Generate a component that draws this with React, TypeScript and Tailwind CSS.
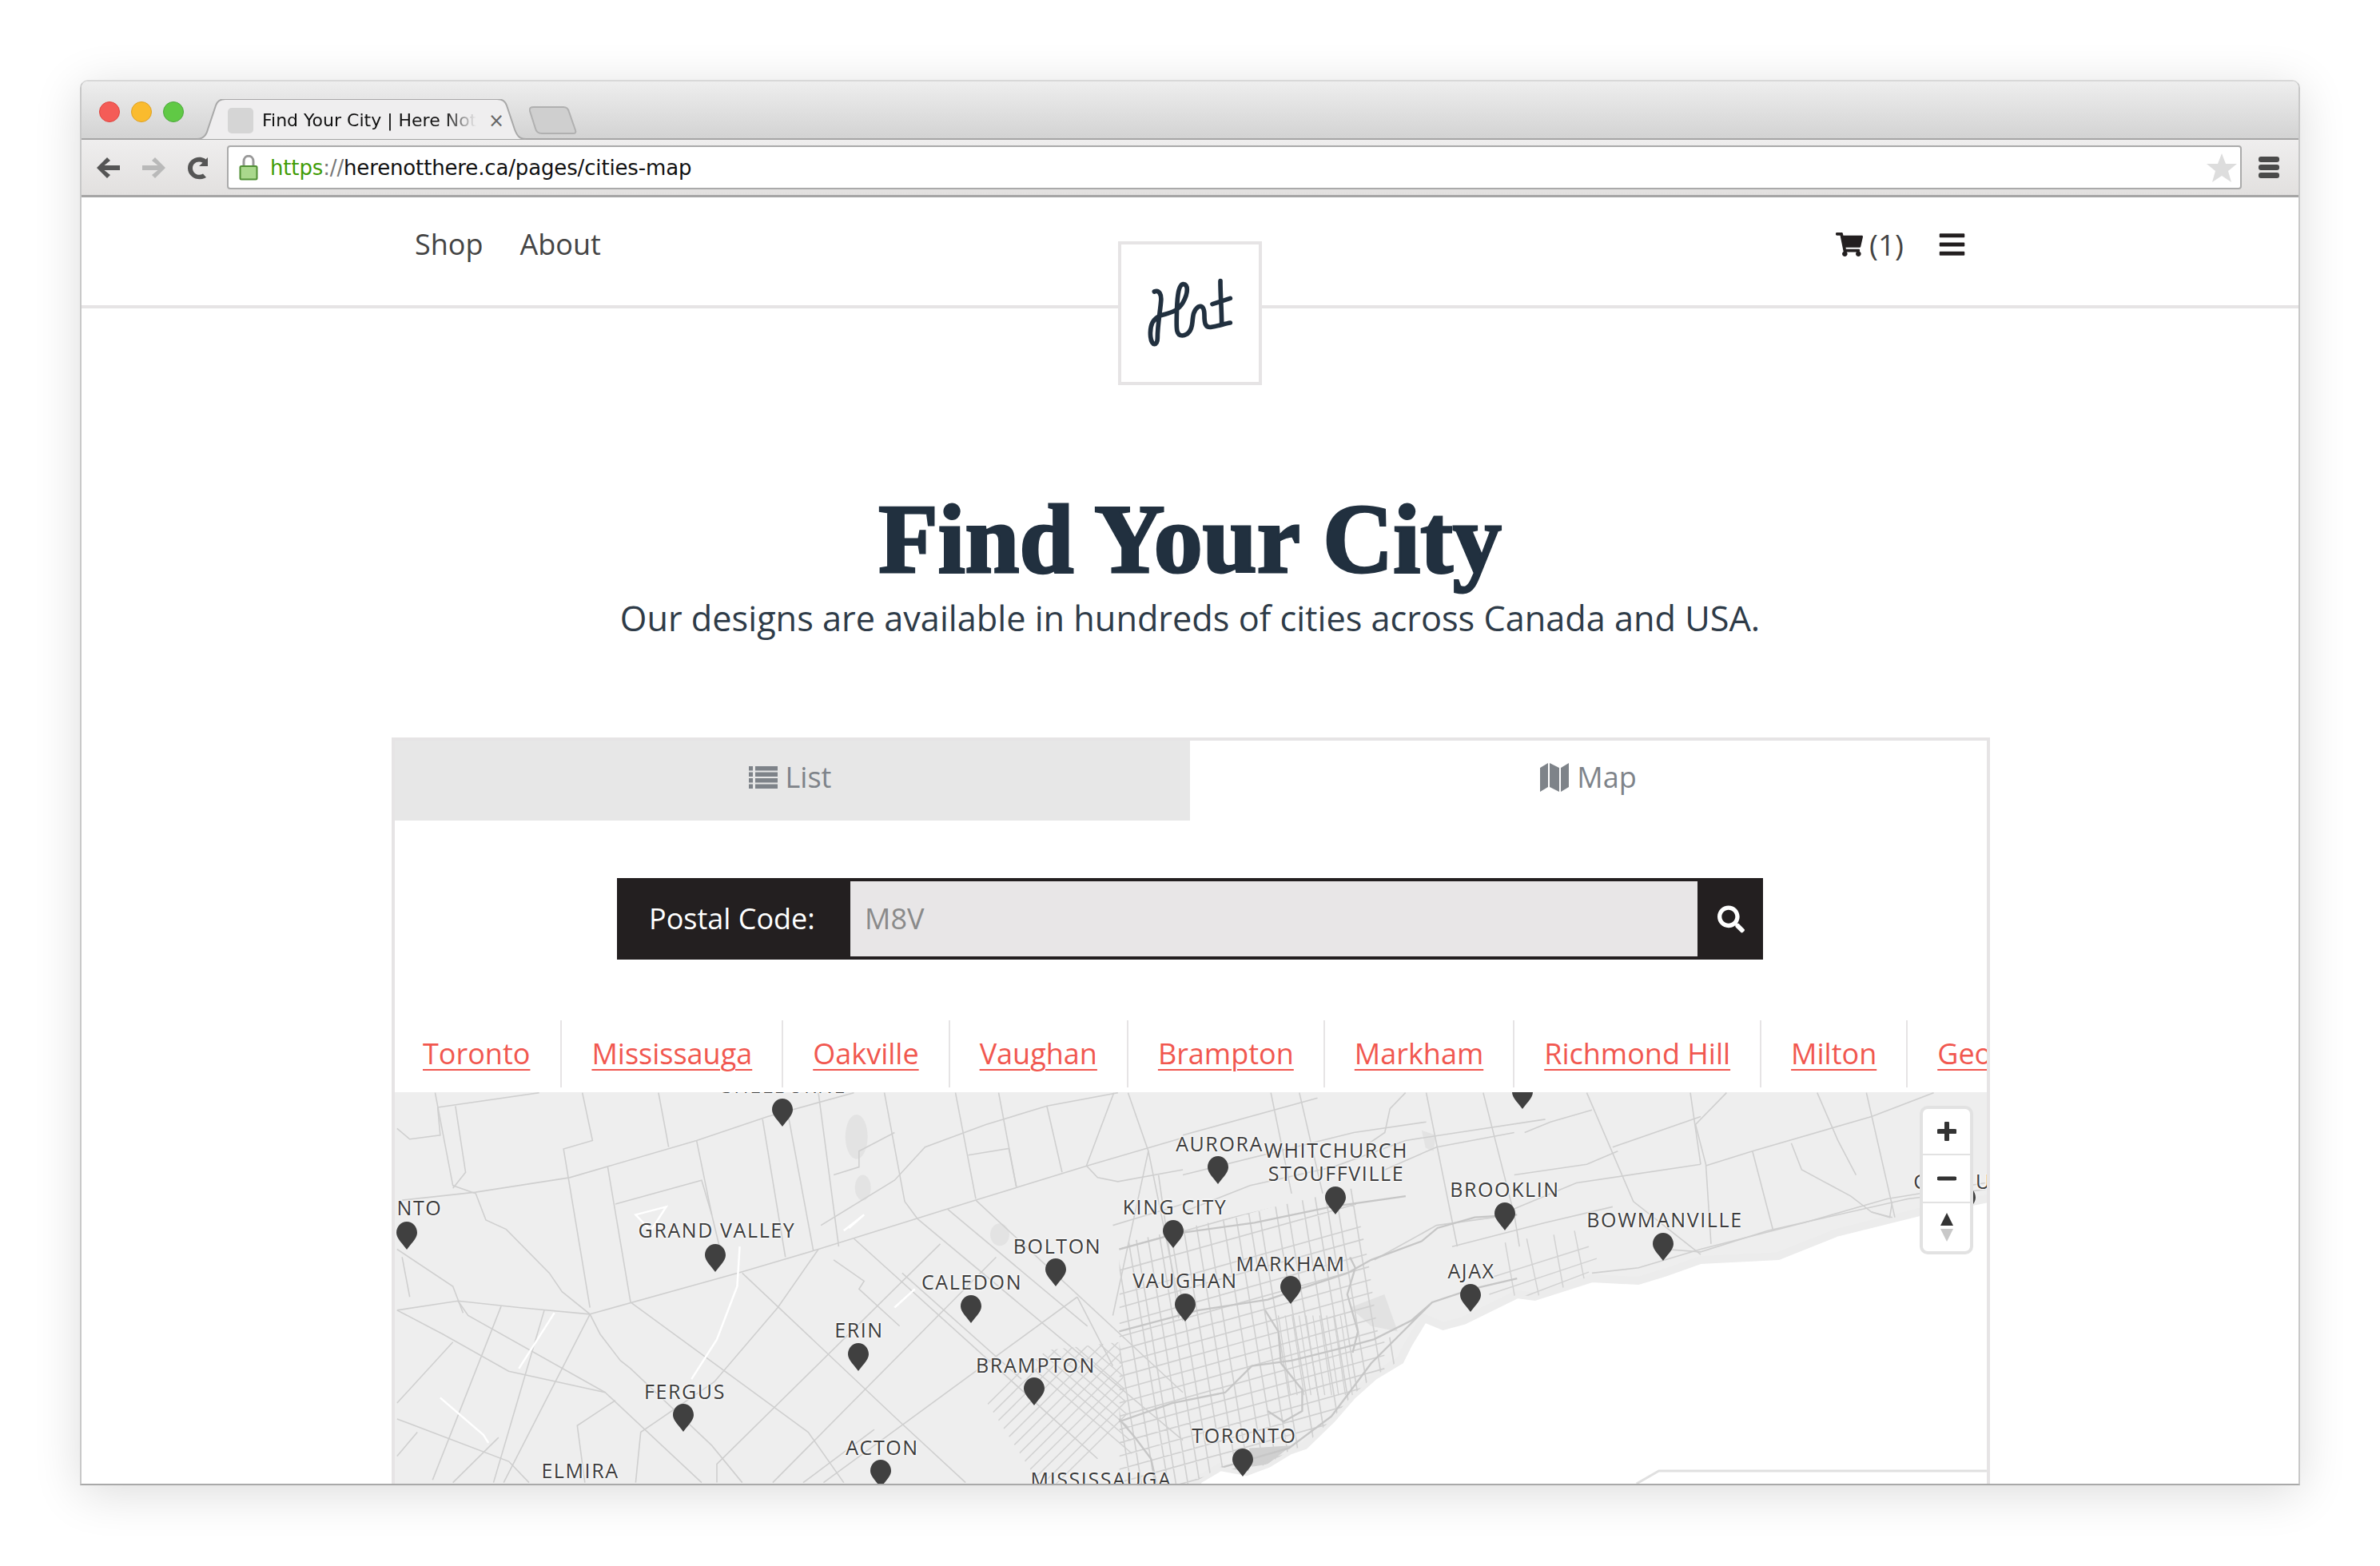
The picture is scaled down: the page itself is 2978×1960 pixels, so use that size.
import { FaBars, FaSearch, FaShoppingCart } from 'react-icons/fa';

const cities = ['Toronto', 'Mississauga', 'Oakville', 'Vaughan', 'Brampton', 'Markham', 'Richmond Hill', 'Milton', 'Georgetown'];

// map items use page coordinates, the map box starts at 494,1366
const pins = [
    [979, 1409], [509, 1563], [895, 1591], [1321, 1609], [1215, 1655], [1074, 1715], [1294, 1758], [855, 1791],
    [1102, 1861], [724, 1892], [1468, 1561], [1483, 1653], [1524, 1481], [1671, 1519], [1883, 1539], [2081, 1577],
    [1615, 1631], [1840, 1641], [1555, 1847], [1905, 1387], [2459, 1519],
];

const labels: [string, number, number][] = [
    ['SHELBURNE', 979, 1348], ['NTO', 523, 1501], ['GRAND VALLEY', 895, 1529], ['BOLTON', 1321, 1549],
    ['CALEDON', 1214, 1594], ['ERIN', 1073, 1654], ['BRAMPTON', 1294, 1698], ['FERGUS', 855, 1731],
    ['ACTON', 1102, 1801], ['ELMIRA', 724, 1830], ['MISSISSAUGA', 1376, 1841], ['KING CITY', 1468, 1500],
    ['VAUGHAN', 1481, 1592], ['AURORA', 1524, 1421], ['WHITCHURCH', 1670, 1429], ['STOUFFVILLE', 1670, 1458],
    ['BROOKLIN', 1881, 1478], ['BOWMANVILLE', 2081, 1516], ['MARKHAM', 1613, 1571], ['AJAX', 1839, 1580],
    ['TORONTO', 1555, 1786], ['C', 2401, 1468], ['U', 2480, 1468],
];

const land = '480,1340 2500,1340 2500,1498 2404,1517 2300,1543 2228,1572 2130,1577 2085,1593 2052,1603 1994,1600 1922,1623 1900,1620 1833,1653 1807,1660 1783,1650 1763,1683 1753,1703 1720,1723 1693,1747 1667,1777 1633,1810 1613,1817 1587,1833 1560,1843 1527,1837 1500,1853 1490,1870 480,1870';

// traced from the left half of the map
const leftRoads = [
    'M95 20 L130 370 L175 400 L195 500 L235 535 L320 700 L345 770 L400 855 L420 930 L460 1030 L480 1060 L640 1350 L700 1490',
    'M135 70 L155 320 L130 380', 'M100 75 L300 20', 'M20 155 L45 195 L105 180 L100 75', 'M30 425 L175 395 L360 340 L610 200 L750 110 L920 20',
    'M385 20 L405 200 L348 232 L400 830', 'M435 300 L480 810', 'M535 20 L555 225', 'M740 120 L785 640', 'M790 100 L840 615', 'M850 20 L890 600',
    'M980 20 L1020 430 L1045 495', 'M1120 20 L1160 420', 'M1205 20 L1240 375', 'M1300 70 L1330 320', 'M1432 20 L1378 295 L1400 340 L1440 355 L1568 310',
    'M450 440 L620 350 L640 480', 'M610 200 L640 480 L660 640', 'M855 520 L1000 350 L1060 225 L1180 140 L1300 70 L1440 20', 'M880 330 L930 300 L930 240 L1000 170',
    'M1145 255 L1225 230 L1240 375', 'M20 840 L140 805 L260 830 L400 855', 'M20 840 L110 930 L240 1070 L430 1150 L620 1490', 'M140 805 L160 860 L430 1150',
    'M20 610 L130 750 L150 850', 'M30 640 L45 790', 'M225 825 L90 1480', 'M310 840 L210 1490', 'M400 855 L230 1490', 'M400 855 L700 695 L850 610 L1160 425 L1380 295 L1568 190',
    'M700 700 L1010 1260 L1140 1490', 'M480 810 L830 1300 L900 1490', 'M920 570 L1400 1400', 'M1045 495 L1568 1330', 'M1160 425 L1568 1150', 'M1090 590 L650 1420 L650 1490',
    'M1200 640 L760 1490', 'M1360 790 L860 1490', 'M850 610 L770 830 L645 1110 L500 1300 L490 1490', 'M880 650 L940 730 L930 760 L1010 900', 'M20 1250 L240 1410 L280 1490', 'M20 1190 L130 960',
    'M450 1180 L375 1275 L390 1490', 'M1430 520 L1568 440', 'M1460 20 L1500 240 L1568 880', 'M1500 240 L1430 860', 'M1520 330 L1560 870',
    'M1105 460 L1380 900', 'M1015 700 L1250 1100', 'M1360 790 L1430 1050', 'M960 1290 L820 1490', 'M20 1390 L60 1300', 'M130 1490 L220 1320',
];

const rightRoads = [
    'M0 470 L130 370 L290 300 L430 200 L700 120', 'M370 650 L490 520 L600 490 L760 360 L1000 290', 'M520 600 L700 510 L830 450',
    'M930 610 L1000 620 L1130 540 L1400 420 L1550 385', 'M790 700 L880 680 L1000 610 L1200 510 L1360 420 L1550 360', 'M660 170 L710 130 L790 85', 'M830 225 L1000 110',
    'M1010 295 L1100 240 L1330 110 L1450 20', 'M470 20 L530 600', 'M580 20 L640 480 L650 600', 'M780 20 L870 430 L1000 630', 'M980 20 L1000 290', 'M1050 20 L990 140 L1010 290 L1020 590',
    'M1100 240 L1140 540', 'M1175 210 L1195 310 L1290 410 L1330 470 L1370 490', 'M1225 20 L1265 200 L1300 330', 'M1320 20 L1375 490', 'M430 20 L400 80 L390 170 L360 210',
    'M225 20 L270 400', 'M170 20 L210 400', 'M0 180 L260 40', 'M0 330 L330 170 L470 130',
    'M640 330 L780 290 L840 240', 'M390 310 L490 225 L640 170', 'M1370 430 L1365 490 L1330 470',
];

const creeks = ['M600 1100 L650 950 L690 750 L695 600', 'M105 1170 L190 1310 L200 1340', 'M490 480 L550 450 L520 540 Z', 'M900 540 L940 480 L910 530', 'M260 1060 L330 850', 'M1000 830 L1040 760'];

// street offsets of the Toronto grid, read off a 3x crop starting at 1400,1480
const streetX = [-180, -140, -100, -50, 0, 30, 75, 120, 165, 215, 265, 310, 370, 420, 470, 510, 575, 620, 680, 730, 770, 810, 870, 925];
const streetY = [250, 330, 420, 470, 530, 580, 630, 680, 730, 780, 830, 880, 930, 980, 1030, 1080, 1130, 1200, 1280, 1360, 1440, 1520];
const arterials = [
    'M0 900 L200 830 L400 790 L500 690 L650 670 L850 620 L960 590 L1100 520 L1180 450 L1330 400 L1500 360',
    'M0 560 L300 480 L560 440 L860 340 L950 290 L1140 220 L1200 170 L1340 130 L1500 120',
    'M0 250 L220 190 L510 150 L800 90 L1080 50',
    'M380 1075 L640 1000 L800 880 L950 680 L1100 530 L1180 450',
    'M550 480 L600 560 L610 680 L690 780 L690 860 L620 900 L560 860',
    'M870 280 L890 320 L860 420 L900 560 L880 640',
    'M0 890 L60 960 L120 1040 L140 1130',
];

function BrowserChrome() {
    return (
        <div className="shrink-0 font-['DejaVu_Sans',sans-serif]">
            <div className="flex h-[73px] items-start border-b-2 border-[#a5a5a5] bg-gradient-to-b from-[#eeeeee] to-[#d3d3d3] pl-[22px]">
                <div className="mt-[25px] flex gap-[14px]">
                    <div className="h-[26px] w-[26px] rounded-full border border-[#e0443e] bg-[#f45c57]" />
                    <div className="h-[26px] w-[26px] rounded-full border border-[#dea123] bg-[#fabb2e]" />
                    <div className="h-[26px] w-[26px] rounded-full border border-[#4ba83b] bg-[#60c945]" />
                </div>
                <div className="relative z-10 ml-[16px] mt-[22px] flex h-[49px] w-[412px] shrink-0 items-center pl-[39px] pt-[4px]">
                    <svg className="absolute inset-0" width="412" height="51" viewBox="0 0 412 51" fill="none">
                        <path d="M0 50 C8 50 12 46 14 38 L24 8 C26 2 30 0 36 0 L376 0 C382 0 386 2 388 8 L398 38 C401 46 404 50 412 50 Z" fill="#efeeef" />
                        <path d="M0 50 C8 50 12 46 14 38 L24 8 C26 2 30 0 36 0 L376 0 C382 0 386 2 388 8 L398 38 C401 46 404 50 412 50" stroke="#a8a8a8" strokeWidth="2" />
                    </svg>
                    <div className="relative h-[32px] w-[32px] shrink-0 rounded-[5px] bg-[#d5d5d5]" />
                    <span className="relative ml-[11px] w-[268px] whitespace-nowrap text-[22px] leading-[32px] text-[#111] [mask-image:linear-gradient(to_right,black_85%,transparent_100%)]">Find Your City | Here Not</span>
                    <span className="relative ml-[15px] text-[24px] leading-[32px] text-[#666]">×</span>
                </div>
                <svg className="ml-[3px] mt-[31px] shrink-0" width="62" height="36" viewBox="0 0 62 36" fill="none">
                    <path d="M2 6 C1 2 3 1 7 1 L44 1 C48 1 50 3 51 7 L59 30 C60 33 59 34 56 34 L17 34 C12 34 10 32 9 28 Z" fill="#cfcfcf" stroke="#b0b0b0" strokeWidth="2" />
                </svg>
            </div>
            <div className="flex h-[72px] items-center border-b-[3px] border-[#a5a5a5] bg-gradient-to-b from-[#efeeee] to-[#e2e0df] pl-[17px] pr-[24px]">
                <svg width="32" height="32" viewBox="0 0 32 32" className="shrink-0"><path d="M15 3 L2 16 L15 29 L19 25 L11.5 19 L31 19 L31 13 L11.5 13 L19 7 Z" fill="#555" /></svg>
                <svg width="32" height="32" viewBox="0 0 32 32" className="ml-[26px] shrink-0"><path d="M17 3 L30 16 L17 29 L13 25 L20.5 19 L1 19 L1 13 L20.5 13 L13 7 Z" fill="#b9b9b9" /></svg>
                <svg width="30" height="32" viewBox="0 0 30 32" className="ml-[24px] shrink-0"><path d="M27 3 L27 14 L16 14 L20.5 9.8 C15 6.5 8 10 8 16.5 C8 23 15 27 21 23.5 L25 28 C16 34 2 28 2 16.5 C2 5 16 -1 24.5 5.5 Z" fill="#555" /></svg>
                <div className="ml-[21px] flex h-[55px] flex-1 items-center rounded-[4px] border-2 border-[#aaaaaa] bg-white pl-[13px]">
                    <svg width="24" height="32" viewBox="0 0 24 32" className="shrink-0">
                        <path d="M6 15 L6 8 C6 -1 18 -1 18 8 L18 15" fill="none" stroke="#999" strokeWidth="3" />
                        <rect x="1.5" y="14" width="21" height="16.5" rx="1.5" fill="#a9d88c" stroke="#4f8f33" strokeWidth="2" />
                    </svg>
                    <div className="ml-[15px] whitespace-nowrap text-[26px] leading-[32px] tracking-[-0.15px] text-[#111]">
                        <span className="text-[#3f9c06]">https</span><span className="text-[#777]">://</span>herenotthere.ca/pages/cities-map
                    </div>
                    <svg width="38" height="36" viewBox="0 0 38 36" className="ml-auto mr-[4px] shrink-0"><path d="M19 0 L24 13 L38 13 L27 22 L31 36 L19 28 L7 36 L11 22 L0 13 L14 13 Z" fill="#dddddd" /></svg>
                </div>
                <div className="ml-[21px] flex w-[26px] shrink-0 flex-col gap-[3px]">
                    <div className="h-[7px] rounded-[3px] bg-[#4a4a4a]" />
                    <div className="h-[7px] rounded-[3px] bg-[#4a4a4a]" />
                    <div className="h-[7px] rounded-[3px] bg-[#4a4a4a]" />
                </div>
            </div>
        </div>
    );
}

function Logo() {
    return (
        <div className="absolute left-1/2 top-[55px] h-[180px] w-[180px] -translate-x-1/2 border-4 border-[#e6e4e5] bg-white">
            <svg viewBox="1402 306 172 172" className="h-full w-full" fill="none">
                <g transform="translate(1430 340) scale(0.3333)" stroke="#21303f" strokeWidth="17" strokeLinecap="round" strokeLinejoin="round">
                    <path d="M40 75 C58 68 68 85 65 112 C62 150 52 200 52 250 C52 280 30 280 26 245 C22 205 32 178 62 165 C90 155 125 155 148 115 C168 80 168 45 148 47 C128 50 125 110 124 170 C123 215 122 240 145 240 C170 238 180 220 183 190 C185 165 187 145 205 132 C222 124 228 140 228 165 C228 195 232 212 255 208 C280 204 305 195 325 192" />
                    <path d="M288 35 C288 90 293 140 293 197" />
                    <path d="M258 122 L325 100" />
                </g>
            </svg>
        </div>
    );
}

function TopNav() {
    return (
        <div className="relative h-[139px] shrink-0 border-b-4 border-[#e6e4e5]">
            <div className="mx-auto flex w-[1940px] items-start justify-between pt-[32px] text-[36px] leading-[54px] text-[#444]">
                <div className="flex gap-[46px]">
                    <span>Shop</span>
                    <span>About</span>
                </div>
                <div className="flex items-center">
                    <FaShoppingCart className="h-[34px] w-[34px] text-[#231f20]" />
                    <span className="ml-[8px] text-[37px]">(1)</span>
                    <FaBars className="ml-[44px] h-[36px] w-[33px] text-[#231f20]" />
                </div>
            </div>
            <Logo />
        </div>
    );
}

function MapView() {
    const streets = [];
    for (const x of streetX) streets.push(`M${x} 0 L${x + 185} 1140`);
    for (const y of streetY) streets.push(`M0 ${y} L1000 ${y - 280}`);
    const dense = [];
    for (let x = 600; x < 860; x += 26) dense.push(`M${x} 500 L${x + 45} 800`);
    const diamonds = [];
    for (let i = 0; i < 14; i++) diamonds.push(`M${1230 + i * 17} 1660 L${1460 + i * 17} 1858`);
    for (let i = 0; i < 14; i++) diamonds.push(`M${1300 + i * 17} 1660 L${1100 + i * 17} 1858`);
    const whitby = ['M1885 1555 L1900 1640', 'M1912 1550 L1928 1625', 'M1946 1545 L1958 1612', 'M1972 1540 L1984 1600', 'M1865 1620 L2000 1575', 'M1870 1598 L1990 1560', 'M1890 1630 L1990 1592'];

    return (
        <div className="relative flex-1 overflow-hidden bg-white font-['Open_Sans',sans-serif]">
            <svg className="absolute inset-0 h-full w-full" viewBox="494 1366 1992 492" fill="none">
                <defs>
                    <clipPath id="land"><polygon points={land} /></clipPath>
                    <clipPath id="city"><polygon points="0,230 880,20 940,300 980,600 1200,500 1000,800 400,1200 0,1200" /></clipPath>
                    <clipPath id="peel"><polygon points="1230,1750 1310,1690 1400,1680 1420,1858 1300,1858" /></clipPath>
                </defs>
                <polygon points={land} fill="#eeeeee" stroke="#ececec" strokeWidth="10" />
                <g clipPath="url(#land)" fill="#e3e3e3">
                    <ellipse cx="1070" cy="1422" rx="14" ry="28" />
                    <ellipse cx="1078" cy="1486" rx="10" ry="16" />
                    <ellipse cx="1250" cy="1545" rx="12" ry="14" />
                    <polygon points="1780,1414 1798,1420 1795,1440 1785,1436" />
                    <g clipPath="url(#peel)" stroke="#d2d2d2" strokeWidth="1.5" fill="none">
                        <path d={diamonds.join(' ')} />
                    </g>
                    <g transform="translate(480 1360) scale(0.6378 0.3333)" stroke="#cfcfcf" strokeWidth="1.6" fill="none">
                        {leftRoads.map((d) => <path key={d} d={d} vectorEffect="non-scaling-stroke" />)}
                    </g>
                    <g transform="translate(1480 1360) scale(0.6506 0.3333)" stroke="#cfcfcf" strokeWidth="1.6" fill="none">
                        {rightRoads.map((d) => <path key={d} d={d} vectorEffect="non-scaling-stroke" />)}
                    </g>
                    <path d={whitby.join(' ')} stroke="#d2d2d2" strokeWidth="1.5" fill="none" />
                    <g transform="translate(1400 1480) scale(0.3333)">
                        <polygon points="870,470 1000,420 1050,560 950,540" fill="#e2e2e2" />
                        <polygon points="490,1000 650,990 560,1060 500,1070" fill="#d0d0d0" />
                        <g clipPath="url(#city)" stroke="#d0d0d0" strokeWidth="5" fill="none">
                            <path d={streets.join(' ')} />
                            <path d={dense.join(' ')} strokeWidth="4" />
                        </g>
                        <path d={arterials.join(' ')} stroke="#c6c6c6" strokeWidth="7" fill="none" />
                    </g>
                    <g transform="translate(480 1360) scale(0.6378 0.3333)" stroke="#ffffff" strokeWidth="2.5" fill="none">
                        {creeks.map((d) => <path key={d} d={d} vectorEffect="non-scaling-stroke" />)}
                    </g>
                </g>
                <path d="M2050 1858 L2078 1842 L2490 1842" stroke="#e0e0e0" strokeWidth="3" />
            </svg>

            {labels.map(([text, x, y]) => (
                <div key={text} className="absolute -translate-x-1/2 whitespace-nowrap text-[25px] leading-[18px] tracking-[1.6px] text-[#3c3c3c] [text-shadow:0_0_3px_#fff,0_0_3px_#fff,0_0_3px_#fff]" style={{ left: x - 492, top: y - 1366 }}>
                    {text}
                </div>
            ))}
            {pins.map(([x, y]) => (
                <svg key={`${x}-${y}`} className="absolute" width="26" height="35" viewBox="0 0 26 35" style={{ left: x - 507, top: y - 1401 }}>
                    <path d="M13 0 C20 0 26 6 26 14 C26 21 17 29 13 35 C9 29 0 21 0 14 C0 6 6 0 13 0 Z" fill="#404040" />
                </svg>
            ))}

            <div className="absolute right-[17px] top-[17px] flex w-[67px] flex-col rounded-[10px] border-4 border-[#e2e2e2] bg-white">
                <div className="flex h-[58px] items-center justify-center border-b-2 border-[#e2e2e2]">
                    <svg width="24" height="24" viewBox="0 0 24 24"><path d="M12 2 L12 22 M2 12 L22 12" stroke="#333" strokeWidth="6" strokeLinecap="round" /></svg>
                </div>
                <div className="flex h-[60px] items-center justify-center border-b-2 border-[#e2e2e2]">
                    <svg width="24" height="8" viewBox="0 0 24 8"><path d="M2 4 L22 4" stroke="#333" strokeWidth="5" strokeLinecap="round" /></svg>
                </div>
                <div className="flex h-[60px] items-center justify-center">
                    <svg width="16" height="36" viewBox="0 0 16 36">
                        <path d="M8 0 L16 16 L0 16 Z" fill="#333" />
                        <path d="M0 20 L16 20 L8 36 Z" fill="#c8c8c8" />
                    </svg>
                </div>
            </div>
        </div>
    );
}

function ListGlyph() {
    return (
        <svg width="36" height="28" viewBox="0 0 36 28" fill="currentColor">
            <path d="M0 0h5v5.5H0z M8 0h28v5.5H8z M0 7.5h5V13H0z M8 7.5h28V13H8z M0 15h5v5.5H0z M8 15h28v5.5H8z M0 22.5h5V28H0z M8 22.5h28V28H8z" />
        </svg>
    );
}

function MapGlyph() {
    return (
        <svg width="36" height="36" viewBox="0 0 36 36" fill="currentColor">
            <path d="M0 6 L10 0 L10 30 L0 36 Z M12 0 L24 6 L24 36 L12 30 Z M26 6 L36 0 L36 30 L26 36 Z" />
        </svg>
    );
}

function cityClass(i: number) {
    return i === 0
        ? 'flex shrink-0 items-center border-r-2 border-[#e6e4e5] pl-[35px] pr-[38px]'
        : 'flex shrink-0 items-center border-r-2 border-[#e6e4e5] px-[37px]';
}

function CityFinder() {
    return (
        <div className="ml-[388px] mt-[119px] flex min-h-0 w-[2000px] flex-1 flex-col border-x-4 border-t-4 border-[#e6e4e5]">
            <div className="flex h-[100px] shrink-0 text-[36px] text-[#7e8389]">
                <div className="flex w-[995px] items-center justify-center gap-[10px] bg-[#e7e7e7] pb-[8px] pr-[6px]">
                    <ListGlyph />
                    <span>List</span>
                </div>
                <div className="flex flex-1 items-center justify-center gap-[10px] pb-[8px]">
                    <MapGlyph />
                    <span>Map</span>
                </div>
            </div>

            <div className="ml-[278px] mt-[72px] flex h-[102px] w-[1434px] shrink-0 bg-[#231f20] text-[36px]">
                <div className="flex w-[292px] items-center pl-[40px] text-white">Postal Code:</div>
                <div className="my-[4px] flex flex-1 items-center bg-[#e8e6e7] pl-[18px] text-[#8a8a8a]">M8V</div>
                <div className="flex w-[82px] items-center justify-center">
                    <FaSearch className="h-[35px] w-[35px] pl-[1px] text-white" />
                </div>
            </div>

            <div className="mt-[76px] flex h-[90px] shrink-0 overflow-hidden pb-[6px] text-[36px] text-[#f1574f]">
                {cities.map((city, i) => (
                    <div key={city} className={cityClass(i)}>
                        <span className="underline decoration-2 underline-offset-[6px]">{city}</span>
                    </div>
                ))}
            </div>

            <MapView />
        </div>
    );
}

export default function App() {
    return (
        <div className="h-[1960px] w-[2978px] overflow-hidden bg-white pl-[100px] pt-[100px] font-['Open_Sans',sans-serif]">
            <div className="flex h-[1759px] w-[2778px] flex-col overflow-hidden rounded-t-[10px] border-x-2 border-b-2 border-t-2 border-x-[#c8c8c8] border-b-[#a9a9a9] border-t-[#d8d8d8] bg-white shadow-[0_10px_60px_rgba(0,0,0,0.14)]">
                <BrowserChrome />
                <TopNav />
                <div className="flex min-h-0 flex-1 flex-col">
                    <h1 className="mt-[229px] shrink-0 text-center font-['Liberation_Serif',serif] text-[122px] font-bold leading-[120px] text-[#21303f] [-webkit-text-stroke:3px_#21303f]">Find Your City</h1>
                    <p className="mt-[9px] shrink-0 text-center text-[43.25px] leading-[60px] text-[#2e3b48]">Our designs are available in hundreds of cities across Canada and USA.</p>
                    <CityFinder />
                </div>
            </div>
        </div>
    );
}
